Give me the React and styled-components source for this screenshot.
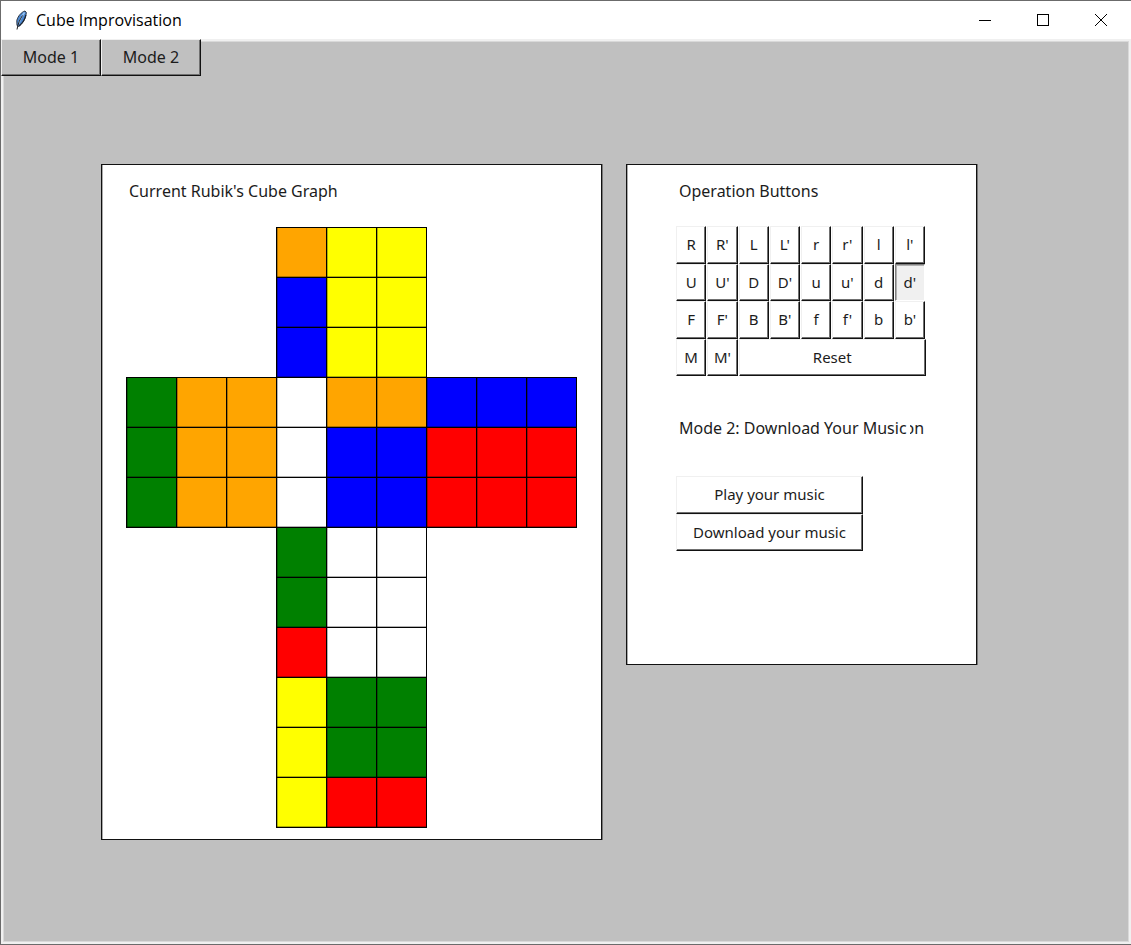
import React from "react";
import styled, { createGlobalStyle, css } from "styled-components";

const GlobalStyle = createGlobalStyle`
  * { box-sizing: border-box; }
  html, body, #root { height: 100%; }
  body { margin: 0; background: #c0c0c0; }
`;

const uiFont = css`
  font-family: "Noto Sans", "Open Sans", sans-serif;
  font-size: 16px;
  line-height: 20px;
  color: #1c1c1c;
`;

const Window = styled.div`
  min-height: 100%;
  display: flex;
  flex-direction: column;
  border: 1px solid #6b6b6b;
  border-right-width: 0;
`;

const TitleBar = styled.header`
  height: 38px;
  display: flex;
  align-items: center;
  padding: 0 1px 0 12px;
  background: #fff;
`;

const Title = styled.h1`
  margin: 0 auto 0 7px;
  padding-bottom: 1px;
  font: 400 16px/20px "Open Sans", "Noto Sans", sans-serif;
  color: #000;
`;

const WindowButton = styled.button`
  width: 58px;
  height: 38px;
  padding: 0;
  border: 0;
  background: transparent;
  display: grid;
  place-items: center;
`;

const Workspace = styled.main`
  flex: 1;
  background: #c0c0c0;
  box-shadow: inset 0 0 0 2px #f0f0f0, inset 0 0 0 3px #d9d9d9;
`;

const Toolbar = styled.nav`
  display: flex;
`;

const Button = styled.button`
  ${uiFont}
  font-size: 15px;
  min-width: 0;
  padding: ${(p) => (p.$pressed ? "0" : "0 0 1px")};
  background: ${(p) => (p.$pressed ? "#f0f0f0" : "#fff")};
  border: 1px solid;
  border-color: ${(p) => (p.$pressed ? "#808080 #fff #fff #808080" : "#f0f0f0 #111 #111 #f0f0f0")};
  box-shadow: ${(p) => (p.$pressed ? "inset 1px 1px #b0b0b0" : "inset -1px -1px #707070")};
`;

const ToolButton = styled(Button)`
  width: 100px;
  height: 37px;
  font-size: 16px;
  background: #c0c0c0;
`;

const MoveButton = styled(Button)`
  margin-right: 1px;
`;

const ResetButton = styled(Button)`
  grid-column: span 6;
`;

const Panels = styled.div`
  display: flex;
  align-items: flex-start;
  gap: 24px;
  padding: 88px 24px 24px 100px;
`;

const Panel = styled.section`
  flex: none;
  background: #fff;
  border: 1px solid #111;
  box-shadow: 1px 0 #777, inset 1px 0 #aaa;
`;

const CubePanel = styled(Panel)`
  padding: 16px 24px 11px;
`;

const OperationPanel = styled(Panel)`
  padding: 16px 50px 113px 49px;
`;

const Heading = styled.h2`
  ${uiFont}
  margin: 0 0 25px 3px;
  font-weight: 400;
`;

const CubeNet = styled.div`
  display: grid;
  grid-template-columns: repeat(9, 50px);
  grid-auto-rows: 50px;
  padding: 1px 1px 1px 0;
`;

const Sticker = styled.div`
  width: 51px;
  height: 51px;
  border: 1px solid #000;
  box-shadow: inset 1px 0 rgba(0, 0, 0, 0.3), inset 0 -1px rgba(0, 0, 0, 0.3);
  background: ${(p) => p.$color};
  grid-column: ${(p) => p.$column};
  grid-row: ${(p) => p.$row};
`;

const MoveGrid = styled.div`
  display: grid;
  width: 250px;
  height: 150px;
  grid-template-columns: repeat(8, 1fr);
  grid-template-rows: repeat(4, 1fr);
`;

const ModeLine = styled.p`
  ${uiFont}
  display: flex;
  margin: 42px 0 38px 3px;
  white-space: nowrap;
`;

const ModeText = styled.span`
  position: relative;
  z-index: 1;
  padding-right: 3px;
  background: #fff;
`;

const OldModeText = styled.span`
  margin-left: -5px;
`;

const MusicButtons = styled.div`
  display: grid;
  width: 187px;
  height: 75px;
  grid-template-rows: repeat(2, 1fr);
`;

const colors = {
  O: "#ffa500",
  Y: "#ffff00",
  B: "#0000ff",
  G: "#008000",
  R: "#ff0000",
  W: "#ffffff",
};

const net = [
  "...OYY...",
  "...BYY...",
  "...BYY...",
  "GOOWOOBBB",
  "GOOWBBRRR",
  "GOOWBBRRR",
  "...GWW...",
  "...GWW...",
  "...RWW...",
  "...YGG...",
  "...YGG...",
  "...YRR...",
];

const moves = [
  "R", "R'", "L", "L'", "r", "r'", "l", "l'",
  "U", "U'", "D", "D'", "u", "u'", "d", "d'",
  "F", "F'", "B", "B'", "f", "f'", "b", "b'",
  "M", "M'",
];

function Feather() {
  return (
    <svg width="16" height="22" viewBox="0 0 16 22" aria-hidden="true">
      <path d="M12 2C8.500 3 5 7 3.800 11.500L4 16.500L5.500 17.500C9.500 15 13 9.500 13.300 3.500Z" fill="#4a86cf" stroke="#2b3442" strokeWidth="1" />
      <path d="M11.500 3.500C8 7.500 6.500 11.500 5.500 15" fill="none" stroke="#9cc6f2" strokeWidth="1.500" />
      <path d="M12.800 6C12 10.500 9 14.500 6 17" fill="none" stroke="#1c2430" strokeWidth="1.300" />
      <path d="M9.500 6.500C7 10 5 14.500 4 20.500" fill="none" stroke="#222" strokeWidth="1" />
    </svg>
  );
}

export default function App() {
  return (
    <>
      <GlobalStyle />
      <Window>
        <TitleBar>
          <Feather />
          <Title>Cube Improvisation</Title>
          <WindowButton aria-label="Minimize">
            <svg width="12" height="12" shapeRendering="crispEdges"><path d="M0 6.500H12" stroke="#000" /></svg>
          </WindowButton>
          <WindowButton aria-label="Maximize">
            <svg width="12" height="12" shapeRendering="crispEdges"><path d="M.5.500H11.500V11.500H.5Z" fill="none" stroke="#000" /></svg>
          </WindowButton>
          <WindowButton aria-label="Close">
            <svg width="12" height="12"><path d="M0 0L12 12M12 0L0 12" stroke="#000" strokeWidth="1" /></svg>
          </WindowButton>
        </TitleBar>
        <Workspace>
          <Toolbar>
            <ToolButton>Mode 1</ToolButton>
            <ToolButton>Mode 2</ToolButton>
          </Toolbar>
          <Panels>
            <CubePanel>
              <Heading>Current Rubik's Cube Graph</Heading>
              <CubeNet>
                {net.map((line, row) =>
                  [...line].map((key, column) =>
                    key === "." ? null : (
                      <Sticker key={`${row}-${column}`} $color={colors[key]} $column={column + 1} $row={row + 1} />
                    )
                  )
                )}
              </CubeNet>
            </CubePanel>
            <OperationPanel>
              <Heading>Operation Buttons</Heading>
              <MoveGrid>
                {moves.map((move) => (
                  <MoveButton key={move} $pressed={move === "d'"}>{move}</MoveButton>
                ))}
                <ResetButton>Reset</ResetButton>
              </MoveGrid>
              <ModeLine>
                <ModeText>Mode 2: Download Your Music</ModeText>
                <OldModeText aria-hidden="true">on</OldModeText>
              </ModeLine>
              <MusicButtons>
                <Button>Play your music</Button>
                <Button>Download your music</Button>
              </MusicButtons>
            </OperationPanel>
          </Panels>
        </Workspace>
      </Window>
    </>
  );
}
